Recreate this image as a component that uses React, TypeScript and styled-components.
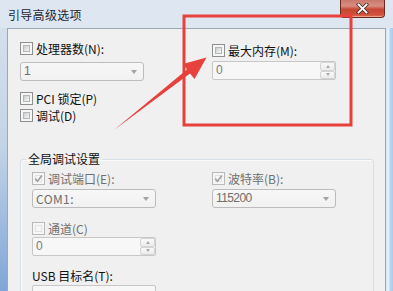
import React from "react";
import styled, { createGlobalStyle } from "styled-components";

const GlobalStyle = createGlobalStyle`
  html, body {
    margin: 0;
    padding: 0;
    background: #fff;
  }
  body {
    width: 393px;
    height: 291px;
    overflow: hidden;
    font-family: "Noto Sans CJK SC", "Noto Sans", sans-serif;
    font-size: 12px;
  }
`;

const Frame = styled.div`
  position: relative;
  width: 393px;
  height: 291px;
  overflow: hidden;
  display: flex;
  flex-direction: column;
  background: linear-gradient(180deg, #dee7f1 0%, #d6e1ee 100%);
`;

const TitleBar = styled.div`
  flex: none;
  height: 28px;
  display: flex;
  align-items: flex-start;
`;

const Title = styled.div`
  padding: 8px 0 0 8px;
  font-size: 12px;
  line-height: 14px;
  letter-spacing: 0.3px;
  color: #1b2530;
`;

const CloseButton = styled.div`
  margin-left: auto;
  margin-right: 8px;
  width: 45px;
  height: 18px;
  box-sizing: border-box;
  border: 1px solid #6a2a20;
  border-top: none;
  border-radius: 0 0 4px 4px;
  background: linear-gradient(180deg, #c9786c 0%, #d98e80 35%, #c74634 55%, #d0503a 85%, #e0705a 100%);
  box-shadow: inset 0 -1px 0 rgba(255, 190, 170, 0.6);
  display: flex;
  align-items: center;
  justify-content: center;
`;

const Body = styled.div`
  flex: 1;
  display: flex;
  min-height: 0;
`;

const SideFrame = styled.div<{ $side: "left" | "right" }>`
  flex: none;
  width: 7px;
  background: ${(p) =>
    p.$side === "left"
      ? "linear-gradient(180deg, #d4dfec 0%, #c3d3e6 45%, #7fa6d6 100%)"
      : "linear-gradient(90deg, #d2e2f3 0%, #eef5fc 30%, #b9d5f1 60%, #a9cbee 100%)"};
`;

const Client = styled.div`
  flex: 1;
  box-sizing: border-box;
  border: 1px solid #9aa8b8;
  border-bottom: none;
  background: #f0f0f0;
  padding: 13px 0 0 12px;
`;

const TwoCols = styled.div<{ $first: number }>`
  display: grid;
  grid-template-columns: ${(p) => p.$first}px 125px;
`;

const Column = styled.div`
  display: flex;
  flex-direction: column;
  align-items: flex-start;
`;

const CheckRow = styled.label<{ $top?: number; $disabled?: boolean }>`
  display: flex;
  align-items: center;
  gap: 3px;
  height: 13px;
  margin-top: ${(p) => p.$top ?? 0}px;
  font-size: 12px;
  line-height: 13px;
  white-space: nowrap;
  color: ${(p) => (p.$disabled ? "#6f6f6f" : "#111")};
`;

const Box = styled.span<{ $disabled?: boolean }>`
  position: relative;
  flex: none;
  width: 13px;
  height: 13px;
  box-sizing: border-box;
  border: 1px solid ${(p) => (p.$disabled ? "#b9b9b9" : "#8e8f8f")};
  background: #f6f6f6;
  display: flex;
  align-items: center;
  justify-content: center;

  &::before {
    content: "";
    position: absolute;
    inset: 2px;
    box-sizing: border-box;
    border: 1px solid ${(p) => (p.$disabled ? "#e2e2e2" : "#b3b7bb")};
    background: ${(p) =>
      p.$disabled
        ? "#f7f7f7"
        : "linear-gradient(135deg, #c9cbcd 0%, #e4e5e6 55%, #f4f4f4 100%)"};
  }

  svg {
    position: relative;
  }
`;

const Select = styled.div<{ $top?: number; $mono?: boolean }>`
  width: 124px;
  height: 19px;
  margin-top: ${(p) => p.$top ?? 0}px;
  box-sizing: border-box;
  border: 1px solid #bcbcbc;
  border-radius: 3px;
  background: linear-gradient(180deg, #f7f7f7 0%, #f1f1f1 100%);
  display: flex;
  align-items: center;
  padding-left: 3px;
  color: #6d6d6d;
  font-family: ${(p) =>
    p.$mono ? '"Noto Sans CJK SC", sans-serif' : '"Liberation Sans", Arial, sans-serif'};
  font-size: 12px;
  letter-spacing: ${(p) => (p.$mono ? "0.4px" : "-0.6px")};
  line-height: 17px;
`;

const SelectText = styled.span`
  flex: 1;
`;

const DropArrow = styled.span`
  width: 0;
  height: 0;
  margin-right: 6px;
  border-left: 3.5px solid transparent;
  border-right: 3.5px solid transparent;
  border-top: 4px solid #a3a3a3;
`;

const Spinner = styled.div<{ $top?: number }>`
  width: 124px;
  height: 19px;
  margin-top: ${(p) => p.$top ?? 0}px;
  box-sizing: border-box;
  border: 1px solid #c7c7c7;
  border-radius: 2px;
  background: #f7f7f7;
  display: flex;
  align-items: stretch;
  color: #7a7a7a;
  font-family: "Liberation Sans", Arial, sans-serif;
  font-size: 12px;
  line-height: 17px;
`;

const SpinValue = styled.span`
  flex: 1;
  padding-left: 3px;
`;

const SpinColumn = styled.div`
  width: 15px;
  display: flex;
  flex-direction: column;
`;

const SpinButton = styled.div<{ $dir: "up" | "down" }>`
  flex: 1;
  box-sizing: border-box;
  border: 1px solid #d4d4d4;
  border-radius: 2px;
  background: linear-gradient(180deg, #f9f9f9, #ececec);
  display: flex;
  align-items: center;
  justify-content: center;

  &::after {
    content: "";
    width: 0;
    height: 0;
    border-left: 2.5px solid transparent;
    border-right: 2.5px solid transparent;
    ${(p) =>
      p.$dir === "up" ? "border-bottom: 3px solid #a9a9a9;" : "border-top: 3px solid #a9a9a9;"}
  }
`;

const Group = styled.fieldset`
  margin: 30px 0 0 0;
  width: 354px;
  min-width: 0;
  box-sizing: border-box;
  border: 1px solid #d5dfe5;
  border-radius: 3px;
  box-shadow: inset 1px 1px 0 #fbfbfb;
  padding: 6px 0 0 11px;
`;

const GroupTitle = styled.legend`
  margin-left: -6px;
  padding: 0 2px;
  font-size: 12px;
  line-height: 14px;
  color: #111;
`;

const FieldLabel = styled.div<{ $top?: number }>`
  margin-top: ${(p) => p.$top ?? 0}px;
  height: 13px;
  font-size: 12px;
  line-height: 13px;
  color: #111;
  white-space: nowrap;
`;

const Annotation = styled.svg`
  position: absolute;
  left: 0;
  top: 0;
  pointer-events: none;
`;

function CheckMark() {
  return (
    <svg width="9" height="9" viewBox="0 0 9 9">
      <path d="M1.2 4.6 L3.5 7.2 L7.9 1.4" fill="none" stroke="#a0a0a0" strokeWidth="1.6" />
    </svg>
  );
}

function Check({
  label,
  top,
  disabled,
  checked,
}: {
  label: string;
  top?: number;
  disabled?: boolean;
  checked?: boolean;
}) {
  return (
    <CheckRow $top={top} $disabled={disabled}>
      <Box $disabled={disabled}>{checked && <CheckMark />}</Box>
      {label}
    </CheckRow>
  );
}

function Combo({ value, top, mono }: { value: string; top?: number; mono?: boolean }) {
  return (
    <Select $top={top} $mono={mono}>
      <SelectText>{value}</SelectText>
      <DropArrow />
    </Select>
  );
}

function SpinBox({ value, top }: { value: string; top?: number }) {
  return (
    <Spinner $top={top}>
      <SpinValue>{value}</SpinValue>
      <SpinColumn>
        <SpinButton $dir="up" />
        <SpinButton $dir="down" />
      </SpinColumn>
    </Spinner>
  );
}

export default function App() {
  return (
    <>
      <GlobalStyle />
      <Frame>
        <TitleBar>
          <Title>引导高级选项</Title>
          <CloseButton>
            <svg width="13" height="11" viewBox="0 0 13 11">
              <path d="M2.5 1.5 L10.5 9.5 M10.5 1.5 L2.5 9.5" stroke="#3b2a28" strokeWidth="3.4" strokeLinecap="square" />
              <path d="M2.5 1.5 L10.5 9.5 M10.5 1.5 L2.5 9.5" stroke="#fff" strokeWidth="1.9" strokeLinecap="square" />
            </svg>
          </CloseButton>
        </TitleBar>
        <Body>
          <SideFrame $side="left" />
          <Client>
            <TwoCols $first={192}>
              <Column>
                <Check label="处理器数(N):" />
                <Combo value="1" top={7} />
                <Check label="PCI 锁定(P)" top={11} />
                <Check label="调试(D)" top={4} />
              </Column>
              <Column>
                <Check label="最大内存(M):" top={2} />
                <SpinBox value="0" top={4} />
              </Column>
            </TwoCols>

            <Group>
              <GroupTitle>全局调试设置</GroupTitle>
              <TwoCols $first={180}>
                <Column>
                  <Check label="调试端口(E):" disabled checked />
                  <Combo value="COM1:" top={4} mono />
                  <Check label="通道(C)" top={14} disabled />
                  <SpinBox value="0" top={2} />
                  <FieldLabel $top={13}>USB 目标名(T):</FieldLabel>
                  <Spinner $top={3} />
                </Column>
                <Column>
                  <Check label="波特率(B):" disabled checked />
                  <Combo value="115200" top={4} />
                </Column>
              </TwoCols>
            </Group>
          </Client>
          <SideFrame $side="right" />
        </Body>

        <Annotation width="393" height="291" viewBox="0 0 393 291">
          <rect x="184" y="16" width="167" height="109" fill="none" stroke="#e8403a" strokeWidth="3" />
          <polygon
            points="114,130 187,69.5 183,64 206.5,57.5 194.5,79 190,73.5"
            fill="#e8403a"
          />
        </Annotation>
      </Frame>
    </>
  );
}
